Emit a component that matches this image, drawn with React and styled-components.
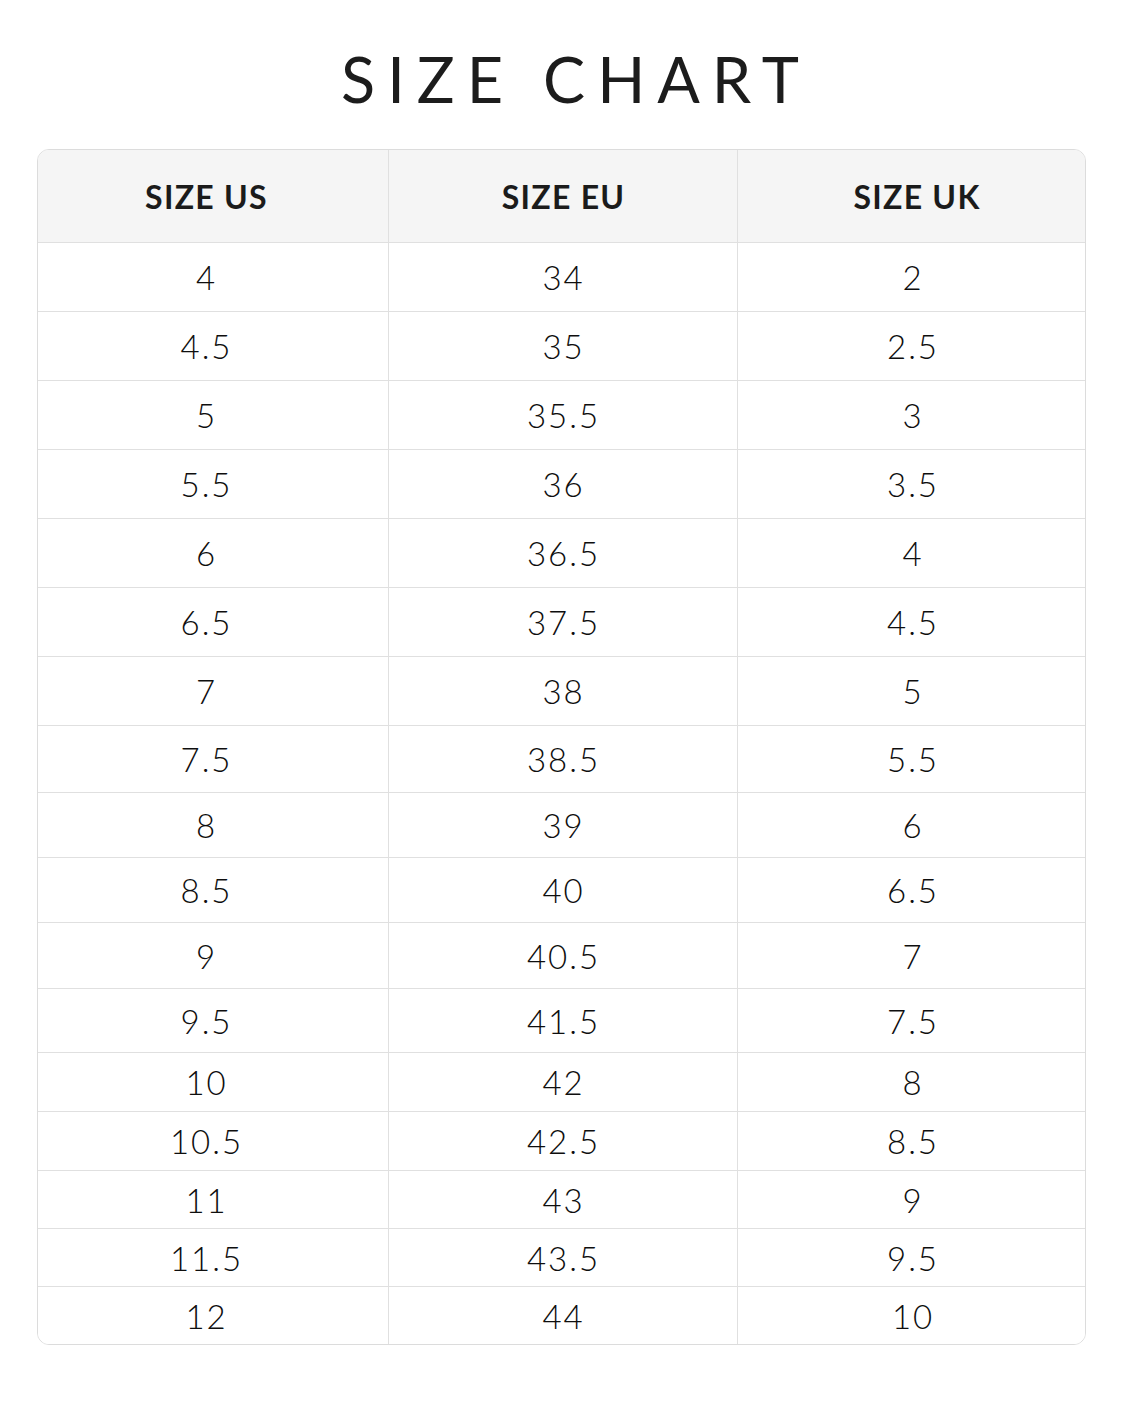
import React from 'react'
import styled, { createGlobalStyle } from 'styled-components';

const GlobalStyle = createGlobalStyle`
body {
  margin: 0;
  background: #ffffff;
  font-family: Lato, "Noto Sans", sans-serif;
  color: #1b1b1b;
}`;

const Page = styled.div`
display: flex;
flex-direction: column;
align-items: center;
width: 1122px;
min-height: 1402px;
padding-top: 47px;
box-sizing: border-box;`;

const Title = styled.h1`
margin: 0 0 38px 0;
padding-left: 18px;
font-size: 63px;
line-height: 64px;
font-weight: 400;
letter-spacing: 0.19em;
margin-right: -0.19em;
color: #1c1c1c;`;

const Table = styled.div`
width: 1049px;
border: 1.5px solid #dcdcdc;
border-radius: 12px;
overflow: hidden;
box-sizing: border-box;`;

const Row = styled.div`
display: grid;
grid-template-columns: 350px 349px 1fr;
height: ${({h}) => h}px;
border-top: ${({first}) => first ? 'none' : '1.5px solid #e0e0e0'};
box-sizing: border-box;
background: ${({head}) => head ? '#f5f5f5' : '#ffffff'};`;

const Cell = styled.div`
display: flex;
align-items: center;
justify-content: center;
padding: ${({first}) => first ? '0 12px 0 0' : '0 0 0 2px'};
border-left: ${({first}) => first ? 'none' : '1.5px solid #e0e0e0'};
font-size: ${({head}) => head ? '32px' : '33px'};
font-weight: ${({head}) => head ? 700 : 300};
letter-spacing: ${({head}) => head ? '0.04em' : '0.06em'};
color: ${({head}) => head ? '#1b1b1b' : '#0e0e0e'};
&:last-child {
  padding-left: ${({head}) => head ? '12px' : '4px'};
}`;

const data = [
  ['4', '34', '2', 69],
  ['4.5', '35', '2.5', 69],
  ['5', '35.5', '3', 69],
  ['5.5', '36', '3.5', 69],
  ['6', '36.5', '4', 69],
  ['6.5', '37.5', '4.5', 69],
  ['7', '38', '5', 69],
  ['7.5', '38.5', '5.5', 67],
  ['8', '39', '6', 65],
  ['8.5', '40', '6.5', 65],
  ['9', '40.5', '7', 66],
  ['9.5', '41.5', '7.5', 64],
  ['10', '42', '8', 59],
  ['10.5', '42.5', '8.5', 59],
  ['11', '43', '9', 58],
  ['11.5', '43.5', '9.5', 58],
  ['12', '44', '10', 58],
];

const App = () => {
  return (
    <Page>
      <GlobalStyle />
      <Title>SIZE CHART</Title>
      <Table>
        <Row head first h={92}>
          <Cell head first>SIZE US</Cell>
          <Cell head>SIZE EU</Cell>
          <Cell head>SIZE UK</Cell>
        </Row>
        {data.map(([us, eu, uk, h]) => (
          <Row key={us} h={h}>
            <Cell first>{us}</Cell>
            <Cell>{eu}</Cell>
            <Cell>{uk}</Cell>
          </Row>
        ))}
      </Table>
    </Page>
  )
}

export default App
